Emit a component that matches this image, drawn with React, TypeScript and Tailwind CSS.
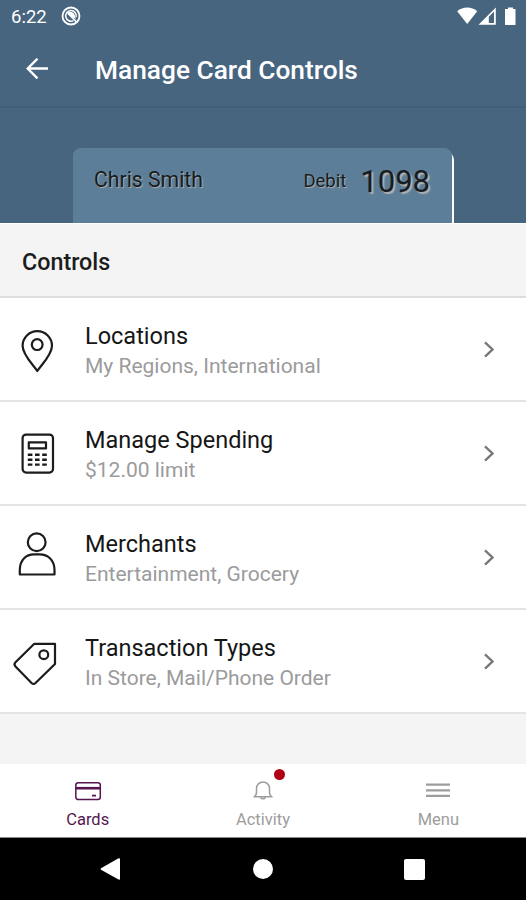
import type { ReactNode } from 'react';

function PinIcon() {
    return (
        <>
            <path d="M29.3 51C25 44.5 14.6 35 14.6 25.8a14.7 14.7 0 0 1 29.4 0C44 35 33.6 44.5 29.3 51Z" />
            <circle cx="29.2" cy="24.6" r="5.4" />
        </>
    );
}

function CalculatorIcon() {
    return (
        <>
            <rect x="14.6" y="10.6" width="30.4" height="38" rx="3.5" />
            <rect x="20.8" y="18.4" width="17.2" height="6" />
            <path d="M19.8 30.8h19M19.8 35.7h19M19.8 40.6h19" strokeDasharray="4.6 2.6" strokeWidth="2.4" />
        </>
    );
}

function PersonIcon() {
    return (
        <>
            <circle cx="28.7" cy="14.3" r="8.9" />
            <path d="M11.8 46.5V42C11.8 32 18 26.4 26 26.4h5.5C40 26.4 46.5 32 46.5 42v4.5Z" />
        </>
    );
}

function TagIcon() {
    return (
        <>
            <path d="M26.3 11.8H47V32L27.5 51Q25.5 52.8 23.5 51L7.5 34.5Q5.5 32.3 7.5 30.3Z" />
            <circle cx="35.8" cy="22.7" r="4.4" />
        </>
    );
}

const controls = [
    { title: 'Locations', detail: 'My Regions, International', icon: <PinIcon /> },
    { title: 'Manage Spending', detail: '$12.00 limit', icon: <CalculatorIcon /> },
    { title: 'Merchants', detail: 'Entertainment, Grocery', icon: <PersonIcon /> },
    { title: 'Transaction Types', detail: 'In Store, Mail/Phone Order', icon: <TagIcon /> },
];

function StatusBar() {
    return (
        <div className="flex h-8 items-center justify-between pl-[11px] pr-[9px] text-white">
            <div className="flex items-center gap-[14px]">
                <span className="pt-[3px] text-[18.5px] leading-[29px]">6:22</span>
                <svg width="20" height="20" viewBox="0 0 20 20" fill="none" stroke="currentColor">
                    <circle cx="10" cy="10" r="8.5" strokeWidth="1.8" />
                    <path d="M12.5 14.6A5.3 5.3 0 1 1 15.2 11" strokeWidth="1.5" />
                    <path d="M6 7c2-2 6-1.8 7.5 1.5L15 13l-3-1.5C9 11.5 8.5 9 6 7Z" fill="currentColor" stroke="none" />
                    <path d="M7 7.5l9 9" strokeWidth="1.6" />
                </svg>
            </div>
            <svg width="60" height="20" viewBox="0 0 60 20" fill="currentColor">
                <path d="M.2 5.3C6 .3 14.5.3 20.2 5.3L10.2 18Z" />
                <path fillRule="evenodd" d="M21.5 18.8 38.8 1.5v17.3ZM31.8 10.8v6.2h5.2V5.6Z" />
                <path d="M48 3h3V1.5h5V3h2.5v16H48Z" />
            </svg>
        </div>
    );
}

function ControlRow({ title, detail, icon }: { title: string; detail: string; icon: ReactNode }) {
    return (
        <div className="flex h-[104px] items-center border-b-2 border-[#e4e4e4] bg-white pl-2 pr-[31px]">
            <svg className="mt-px" width="60" height="60" viewBox="0 0 60 60" fill="none" stroke="#1c1c1c" strokeWidth="2.2" strokeLinejoin="round">
                {icon}
            </svg>
            <div className="ml-[17px] flex-1 pt-[3px]">
                <div className="text-[23.5px] leading-[30px] text-[#161616]">{title}</div>
                <div className="text-[21px] leading-[30px] text-[#9b9b9b]">{detail}</div>
            </div>
            <svg width="12" height="18" viewBox="0 0 12 18" fill="none" stroke="#777777" strokeWidth="2.4">
                <path d="M2 2.3l7.5 7.2L2 16.7" />
            </svg>
        </div>
    );
}

export default function App() {
    return (
        <div className="flex h-[900px] w-[526px] flex-col overflow-hidden bg-[#f4f4f4] font-[Roboto,sans-serif]">
            <div className="h-[223px] bg-[#48657f]">
                <StatusBar />
                <div className="flex h-[76px] items-center border-b-2 border-[#425e78] pl-[26px] text-white">
                    <svg width="23" height="22" viewBox="0 0 23 22" fill="none" stroke="currentColor" strokeWidth="2.4">
                        <path d="M22 10.5H2M11.5.7 1.7 10.5l9.8 9.8" />
                    </svg>
                    <h1 className="ml-[46px] pt-1 text-[26.3px] font-medium">Manage Card Controls</h1>
                </div>
                <div className="ml-[73px] mt-10 h-[75px] w-[379px] rounded-t-lg bg-[#5d7e98] shadow-[2px_4px_0_#ffffff]">
                    <div className="flex items-center pl-[21px] pr-[22px] pt-[12px] text-[#181c20]">
                        <span className="pb-[5px] text-[21.2px] [text-shadow:1px_1px_1px_#b0b0b0]">Chris Smith</span>
                        <span className="ml-auto text-[18.5px] [text-shadow:1px_1px_1px_#b0b0b0]">Debit</span>
                        <span className="ml-[14px] text-[31px] leading-[44px] [text-shadow:2px_2px_1px_#b0b0b0]">1098</span>
                    </div>
                </div>
            </div>

            <div className="flex h-[75px] items-center border-b-2 border-t border-b-[#dedede] border-t-white bg-[#f4f4f4] pl-[22px] pt-1">
                <h2 className="text-[23.3px] font-medium text-[#1c1c1c]">Controls</h2>
            </div>

            {controls.map((control) => (
                <ControlRow key={control.title} {...control} />
            ))}

            <div className="mt-auto grid h-[74px] grid-cols-3 border-b border-[#888888] bg-white text-[16.5px] leading-5 text-[#9d9d9d]">
                <div className="flex flex-col items-center pt-4 text-[#55164f]">
                    <svg width="28" height="22" viewBox="0 0 28 22" fill="none" stroke="currentColor" strokeWidth="1.5">
                        <rect x="1.8" y="2.8" width="24.5" height="16.8" rx="2.5" />
                        <path d="M2 8.2h24" strokeWidth="2.6" />
                        <path d="M18 15.6h4" strokeWidth="1.8" />
                    </svg>
                    <span className="mt-2">Cards</span>
                </div>
                <div className="flex flex-col items-center pt-4">
                    <div className="relative">
                        <svg width="22" height="22" viewBox="0 0 22 22" fill="none" stroke="currentColor" strokeWidth="1.5" strokeLinejoin="round">
                            <path d="M2 16.8c1.8-1 2.5-2.2 2.5-4.5V8.5a6.5 6.5 0 0 1 13 0v3.8c0 2.3.7 3.5 2.5 4.5Z" />
                            <path d="M8.5 17.3a2.8 2.8 0 0 0 5 0" />
                        </svg>
                        <span className="absolute -top-[11px] left-[22px] size-[11px] rounded-full bg-[#b00012]" />
                    </div>
                    <span className="mt-2">Activity</span>
                </div>
                <div className="flex flex-col items-center pt-4">
                    <svg width="24" height="22" viewBox="0 0 24 22" stroke="currentColor" strokeWidth="2.2">
                        <path d="M0 4.7h24M0 10.3h24M0 15.8h24" />
                    </svg>
                    <span className="mt-2">Menu</span>
                </div>
            </div>

            <div className="flex h-[62px] items-center justify-between bg-black pl-[100px] pr-[101px] text-white">
                <svg width="20" height="22" viewBox="0 0 20 22" fill="currentColor">
                    <path d="M1 10.2 18.5.3Q20 0 20 1v20q0 1-1.5.5L1 11.8Q0 11 1 10.2Z" />
                </svg>
                <span className="ml-[2px] size-5 rounded-full bg-white" />
                <span className="size-[21px] rounded-[2px] bg-white" />
            </div>
        </div>
    );
}
